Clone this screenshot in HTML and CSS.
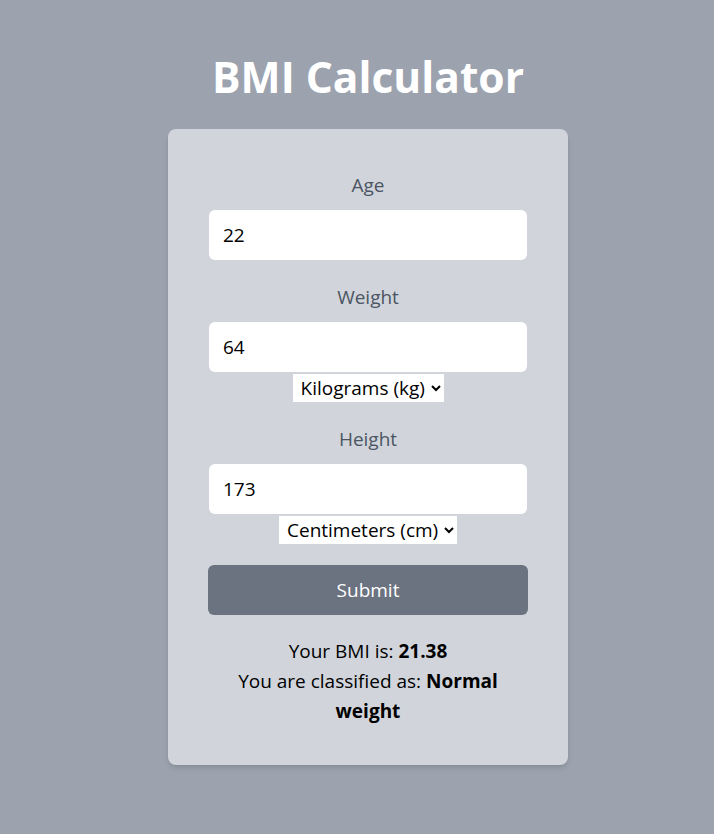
FILE: index.html
```html
<!DOCTYPE html>
<html lang="en">
<head>
<meta charset="utf-8">
<title>BMI Calculator</title>
<link rel="stylesheet" href="styles.css">
</head>
<body>
<main class="page">
  <h1 class="title">BMI Calculator</h1>
  <form class="card">
    <div class="field">
      <label class="label" for="age">Age</label>
      <input class="input" id="age" type="text" value="22">
    </div>
    <div class="field">
      <label class="label" for="weight">Weight</label>
      <input class="input" id="weight" type="text" value="64">
      <select class="unit">
        <option>Kilograms (kg)</option>
        <option>Pounds (lb)</option>
      </select>
    </div>
    <div class="field field-last">
      <label class="label" for="height">Height</label>
      <input class="input" id="height" type="text" value="173">
      <select class="unit">
        <option>Centimeters (cm)</option>
        <option>Inches (in)</option>
      </select>
    </div>
    <button class="submit" type="button">Submit</button>
    <div class="result">
      <p>Your BMI is: <strong>21.38</strong></p>
      <p>You are classified as: <strong>Normal</strong> <strong>weight</strong></p>
    </div>
  </form>
</main>
</body>
</html>
```
FILE: styles.css
```css
* { box-sizing: border-box; }
html, body { margin: 0; padding: 0; }
body {
  background: #9ca3af;
  font-family: "Open Sans", "Noto Sans", sans-serif;
  min-height: 834px;
}
.page {
  display: flex;
  flex-direction: column;
  align-items: center;
  padding-top: 53px;
  padding-left: 22px;
}
.title {
  margin: 0 0 28px;
  font-size: 42.5px;
  line-height: 48px;
  font-weight: 700;
  color: #ffffff;
}
.card {
  width: 400px;
  background: #d1d5db;
  border-radius: 8px;
  box-shadow: 0 4px 6px -1px rgba(0,0,0,0.1), 0 2px 4px -2px rgba(0,0,0,0.1);
  padding: 42px 40px 39px;
  display: flex;
  flex-direction: column;
  align-items: center;
}
.field {
  width: 100%;
  display: flex;
  flex-direction: column;
  align-items: center;
  margin-bottom: 23px;
}
.field-last { margin-bottom: 21px; }
.label {
  font-size: 19px;
  line-height: 28px;
  color: #4b5563;
  margin-bottom: 11px;
}
.input {
  width: 318px;
  height: 50px;
  border: none;
  border-radius: 6px;
  background: #fff;
  padding: 0 14px;
  font-family: inherit;
  font-size: 19px;
  color: #000;
  outline: none;
}
.unit {
  margin-top: 2px;
  height: 28px;
  border: none;
  border-radius: 0;
  background: #fff;
  font-family: inherit;
  font-size: 19px;
  color: #000;
  padding: 0 2px 0 4px;
}
.submit {
  width: 100%;
  height: 50px;
  border: none;
  border-radius: 6px;
  background: #6b7280;
  color: #fff;
  font-family: inherit;
  font-size: 19px;
}
.result {
  margin-top: 21px;
  text-align: center;
  font-size: 19px;
  line-height: 30px;
  color: #000;
}
.result p { margin: 0; }
.result strong { font-weight: 700; }
```
